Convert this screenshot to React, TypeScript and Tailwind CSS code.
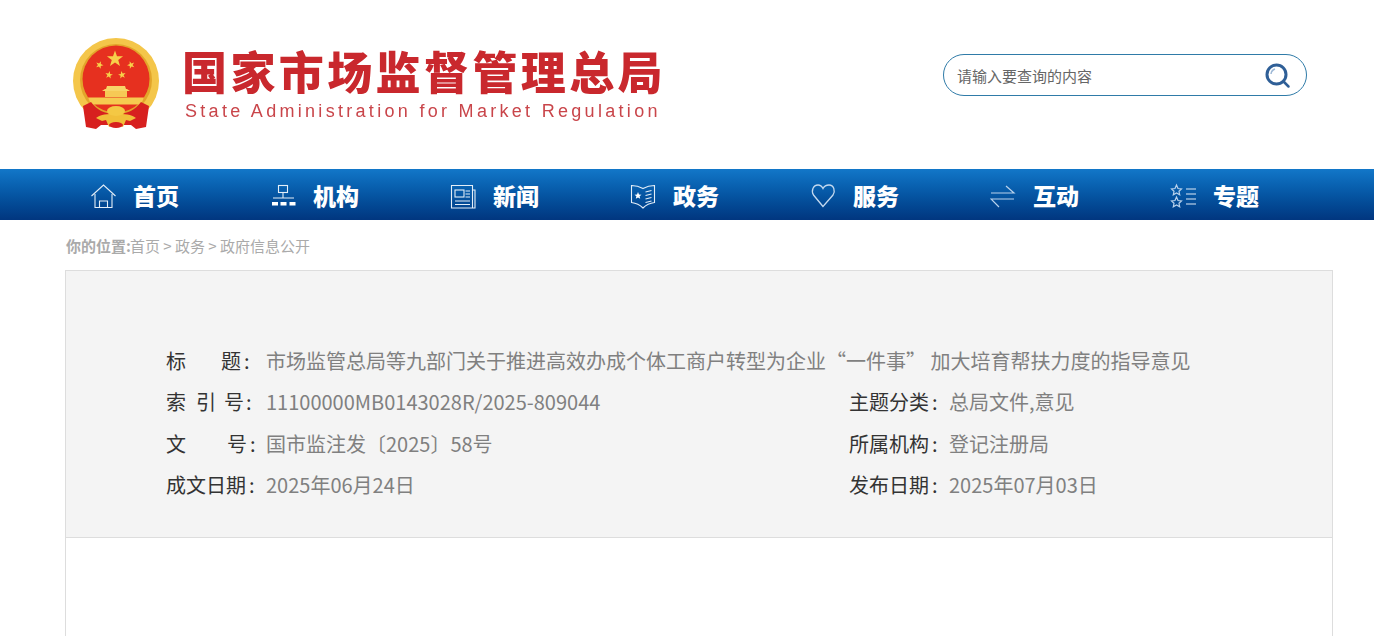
import React from "react";

const cjk = "font-['Noto_Sans_CJK_SC','Noto_Sans',sans-serif]";

function Star({ cx, cy, r, rot = 0 }: { cx: number; cy: number; r: number; rot?: number }) {
  const pts: string[] = [];
  for (let i = 0; i < 10; i++) {
    const rr = i % 2 === 0 ? r : r * 0.4;
    const a = ((-90 + i * 36 + rot) * Math.PI) / 180;
    pts.push(`${cx + rr * Math.cos(a)},${cy + rr * Math.sin(a)}`);
  }
  return <polygon points={pts.join(" ")} fill="#f7d14a" />;
}

function Emblem() {
  return (
    <svg width="92" height="94" viewBox="70 36 92 94" className="mt-[-1px] shrink-0 blur-[0.5px]">
      <circle cx="116" cy="80" r="43" fill="#f4c64a" />
      <circle cx="116" cy="79" r="36" fill="#e2a52a" />
      <circle cx="116" cy="78" r="33.500" fill="#e6301f" />
      <Star cx={115} cy={58} r={8.5} />
      <Star cx={99.5} cy={64} r={4} rot={20} />
      <Star cx={131} cy={64} r={4} rot={-20} />
      <Star cx={109} cy={74} r={4} rot={10} />
      <Star cx={122} cy={74} r={4} rot={-10} />
      <path d="M102 90h28l-3-2h-1l-1-3h-18l-1 3h-1z" fill="#f8d468" />
      <rect x="105" y="90" width="22" height="6" fill="#f6c955" />
      <path d="M88 96.500h56l-3 7H91z" fill="#f6ca50" />
      <path d="M83 105l8-4c6 8 13 12 25 12s19-4 25-12l8 4-3 21-10 2-5-4h-30l-5 4-10-2z" fill="#d7201f" />
      <path d="M96 117c5-4 11-4 20-4s15 0 20 4l-6 3-4-1-3 7-7-3-7 3-3-7-4 1z" fill="#f1bf3a" />
      <ellipse cx="116" cy="110" rx="9" ry="5" fill="#f4c844" />
      <ellipse cx="116" cy="124" rx="7" ry="3" fill="#d7201f" />
    </svg>
  );
}

function Ic({ children }: { children: React.ReactNode }) {
  return (
    <svg width="28" height="28" viewBox="0 0 28 28" fill="none" stroke="#e4eef8" strokeWidth="1.1" className="shrink-0">
      {children}
    </svg>
  );
}

const icons: Record<string, React.ReactNode> = {
  home: (
    <Ic>
      <path d="M1.500 15L13.500 4l12 11" />
      <path d="M5 13v13.500h17V13" />
      <path d="M9.500 26.500V20h8v6.500" />
    </Ic>
  ),
  org: (
    <Ic>
      <rect x="8.500" y="4.500" width="9" height="7" />
      <path d="M13 11.500v5.500M3 17h21" />
      <rect x="2" y="21" width="6" height="3.500" fill="#fff" stroke="none" />
      <rect x="10.500" y="21" width="6" height="3.500" fill="#fff" stroke="none" />
      <rect x="19.500" y="21" width="6" height="3.500" fill="#fff" stroke="none" />
    </Ic>
  ),
  news: (
    <Ic>
      <path d="M22.500 4.500H1.500v22.500h23.500V9h-2.500z" />
      <path d="M22.500 9v18" />
      <rect x="5" y="9" width="9" height="7" stroke="#e4eef8" />
      <path d="M15.500 10h4.500M15.500 13h4.500M15.500 16h4.500M5 20h15M5 23.500h15" />
    </Ic>
  ),
  gov: (
    <Ic>
      <path d="M1.500 4.500c4 0 8 1 11.500 3 3.500-2 7.500-3 11.500-3v17c-4 .5-8 2-11.500 5.500-3.500-3.500-7.500-5-11.500-5.500z" />
      <polygon points="8,11 9,13.500 11.500,13.700 9.600,15.300 10.200,17.800 8,16.500 5.800,17.800 6.400,15.300 4.500,13.700 7,13.500" fill="#fff" stroke="none" />
      <path d="M15.500 11l6-1.500M15.500 14.500l6-1.500M15.500 18l6-1.500M15.500 21.500l6-1.500" />
    </Ic>
  ),
  heart: (
    <svg width="28" height="28" viewBox="0 0 28 28" fill="none" stroke="#c4d9ef" strokeWidth="1.3" className="shrink-0">
      <path d="M13 25.500L3.500 14C1 10 3 4 8 4c2.500 0 4 1.500 5 3.500C14 5.500 16.500 4 19 4c5 0 6.500 6 4 10z" />
    </svg>
  ),
  swap: (
    <svg width="28" height="28" viewBox="0 0 28 28" fill="none" stroke="#b9d2ec" strokeWidth="1.2" className="shrink-0">
      <path d="M1 12h23L16 5M24 18H1l8 8" />
    </svg>
  ),
  topic: (
    <svg width="28" height="28" viewBox="0 0 28 28" fill="none" stroke="#b9d2ec" strokeWidth="1.200" className="shrink-0">
      <polygon points="6.500,4 8,7.500 11.500,7.900 9,10.300 9.700,13.800 6.500,12 3.300,13.800 4,10.300 1.500,7.900 5,7.500" />
      <polygon points="6.500,16 8,19.500 11.500,19.900 9,22.300 9.700,25.800 6.500,24 3.300,25.800 4,22.300 1.500,19.900 5,19.500" />
      <path d="M16 8h10M16 13h10M16 18h10M16 23h10" stroke="#dfeaf6" />
    </svg>
  ),
};

const navItems = [
  ["home", "首页"],
  ["org", "机构"],
  ["news", "新闻"],
  ["gov", "政务"],
  ["heart", "服务"],
  ["swap", "互动"],
  ["topic", "专题"],
];

function Label({ parts }: { parts: [string, number][] }) {
  return (
    <span className="flex w-[100px] shrink-0 text-[#333]">
      {parts.map(([t, m], i) => (
        <span key={i} style={{ marginRight: m }}>
          {t}
        </span>
      ))}
    </span>
  );
}

function Row({ children }: { children: React.ReactNode }) {
  return <div className="flex h-[41.5px] items-center">{children}</div>;
}

export default function App() {
  return (
    <div className={`flex h-[636px] flex-col overflow-hidden bg-white ${cjk}`}>
      <header className="flex h-[169px] shrink-0 items-center pl-[70px] pr-[67px]">
        <Emblem />
        <div className="ml-[20px] mt-[-1px] blur-[0.5px]">
          <div className="whitespace-nowrap text-[45px] font-black leading-[50px] tracking-[3.4px] text-[#c9282d]">
            国家市场监督管理总局
          </div>
          <div className="ml-[3px] mt-[4px] whitespace-nowrap font-['Liberation_Sans',sans-serif] text-[18px] leading-[22px] tracking-[3.3px] text-[#c9454a]">
            State Administration for Market Regulation
          </div>
        </div>
        <div className="mb-[20px] ml-auto flex h-[42px] w-[364px] items-center justify-between rounded-[21px] border border-[#2f7ba8] pl-[13px] pr-[15px]">
          <span className="pt-[3px] text-[15px] text-[#666]">请输入要查询的内容</span>
          <svg width="26" height="26" viewBox="0 0 26 26" fill="none" className="mt-[3px]">
            <circle cx="11.500" cy="11.500" r="9.500" stroke="#2f5f97" strokeWidth="3" />
            <path d="M6 11a6 6 0 0 1 4-5" stroke="#9db8d6" strokeWidth="1.500" />
            <path d="M18.500 18.500l5 5" stroke="#2f5f97" strokeWidth="2.500" strokeLinecap="round" />
          </svg>
        </div>
      </header>

      <nav className="flex h-[51px] shrink-0 items-center bg-gradient-to-b from-[#1277c9] to-[#01367f] pl-[90px]">
        {navItems.map(([ic, t]) => (
          <div key={t} className="flex w-[180px] shrink-0 items-center">
            <span className="flex w-[44px] shrink-0">{icons[ic]}</span>
            <span className="mt-[2px] text-[23px] font-black leading-none text-white ml-[-1px]">{t}</span>
          </div>
        ))}
      </nav>

      <div className="flex h-[50px] shrink-0 items-center pl-[66px] pt-[2px] text-[15px] text-[#aaa]">
        <span className="mr-[-1px] font-bold">你的位置:</span>
        <span>首页 &gt; 政务 &gt; 政府信息公开</span>
      </div>

      <main className="ml-[65px] mr-[41px] flex min-h-0 flex-1 flex-col border-x border-[#ddd]">
        <section className="h-[268px] shrink-0 border-y border-[#ddd] bg-[#f4f4f4] pl-[100px] pt-[69px] text-[20px] text-[#808080]">
          <Row>
            <Label parts={[["标", 35], ["题", 3], [":", 0]]} />
            <span className="whitespace-nowrap">市场监管总局等九部门关于推进高效办成个体工商户转型为企业“一件事” 加大培育帮扶力度的指导意见</span>
          </Row>
          <Row>
            <div className="flex w-[683px] shrink-0">
              <Label parts={[["索", 10], ["引", 8], ["号", 2], [":", 0]]} />
              <span>11100000MB0143028R/2025-809044</span>
            </div>
            <Label parts={[["主题分类", 3], [":", 0]]} />
            <span>总局文件,意见</span>
          </Row>
          <Row>
            <div className="flex w-[683px] shrink-0">
              <Label parts={[["文", 41], ["号", 3], [":", 0]]} />
              <span>国市监注发〔2025〕58号</span>
            </div>
            <Label parts={[["所属机构", 3], [":", 0]]} />
            <span>登记注册局</span>
          </Row>
          <Row>
            <div className="flex w-[683px] shrink-0">
              <Label parts={[["成文日期", 3], [":", 0]]} />
              <span>2025年06月24日</span>
            </div>
            <Label parts={[["发布日期", 3], [":", 0]]} />
            <span>2025年07月03日</span>
          </Row>
        </section>
      </main>
    </div>
  );
}
